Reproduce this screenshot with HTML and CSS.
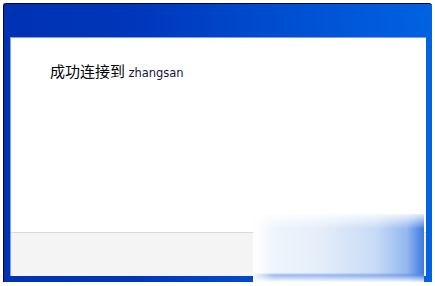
FILE: index.html
```html
<!DOCTYPE html>
<html lang="zh-CN">
<head>
    <meta charset="UTF-8">
    <meta name="viewport" content="width=device-width, initial-scale=1.0">
    <title>连接</title>
    <link rel="stylesheet" href="styles.css">
</head>
<body>
    <div class="screen">
        <div class="window">
            <div class="panel">
                <div class="content">
                    <p class="message">成功连接到 <span class="user">zhangsan</span></p>
                </div>
                <div class="footer"></div>
            </div>
        </div>
        <div class="glow"></div>
    </div>
</body>
</html>
```

FILE: styles.css
```css
* {
    box-sizing: border-box;
}
body {
    margin: 0;
    background: #ffffff;
    font-family: "Noto Sans CJK SC", "DejaVu Sans", sans-serif;
}
.screen {
    position: relative;
    width: 435px;
    height: 286px;
    padding: 3px 0 0 3px;
}
.window {
    width: 429px;
    height: 279px;
    border-top: 1px solid #0a0a14;
    border-left: 1px solid #0a0a14;
    border-radius: 3px 3px 0 0;
    padding: 33px 6px 6px 6px;
    background: linear-gradient(to right, #0032b3 0%, #0036ba 30%, #004ccf 62%, #0063e2 100%);
}
.panel {
    height: 100%;
    display: flex;
    flex-direction: column;
    border-top: 1px solid #7d9fe6;
    border-left: 1px solid #7d9fe6;
    background: #ffffff;
}
.content {
    flex: 1;
    padding: 23px 0 0 39px;
}
.message {
    margin: 0;
    font-size: 15px;
    line-height: 19px;
    color: #000000;
}
.user {
    font-family: "DejaVu Sans", sans-serif;
    font-size: 11.5px;
    color: #14123c;
}
.footer {
    height: 44px;
    border-top: 1px solid #d9d9d9;
    background: #f4f4f4;
}
.glow {
    position: absolute;
    left: 253px;
    top: 214px;
    width: 171px;
    height: 68px;
    background:
        linear-gradient(to bottom, rgba(255,255,255,0.85) 0%, rgba(255,255,255,0) 22%),
        linear-gradient(to right, rgba(255,255,255,0.9) 0%, rgba(255,255,255,0) 12%),
        linear-gradient(to bottom, rgba(255,255,255,0) 86%, rgba(90,140,230,0.55) 90%, rgba(255,255,255,0.9) 100%),
        linear-gradient(to right, #f4f8fd 0%, #e4edf9 40%, #c7daf5 72%, #94b7ef 90%, #3c78e2 100%);
}
```
